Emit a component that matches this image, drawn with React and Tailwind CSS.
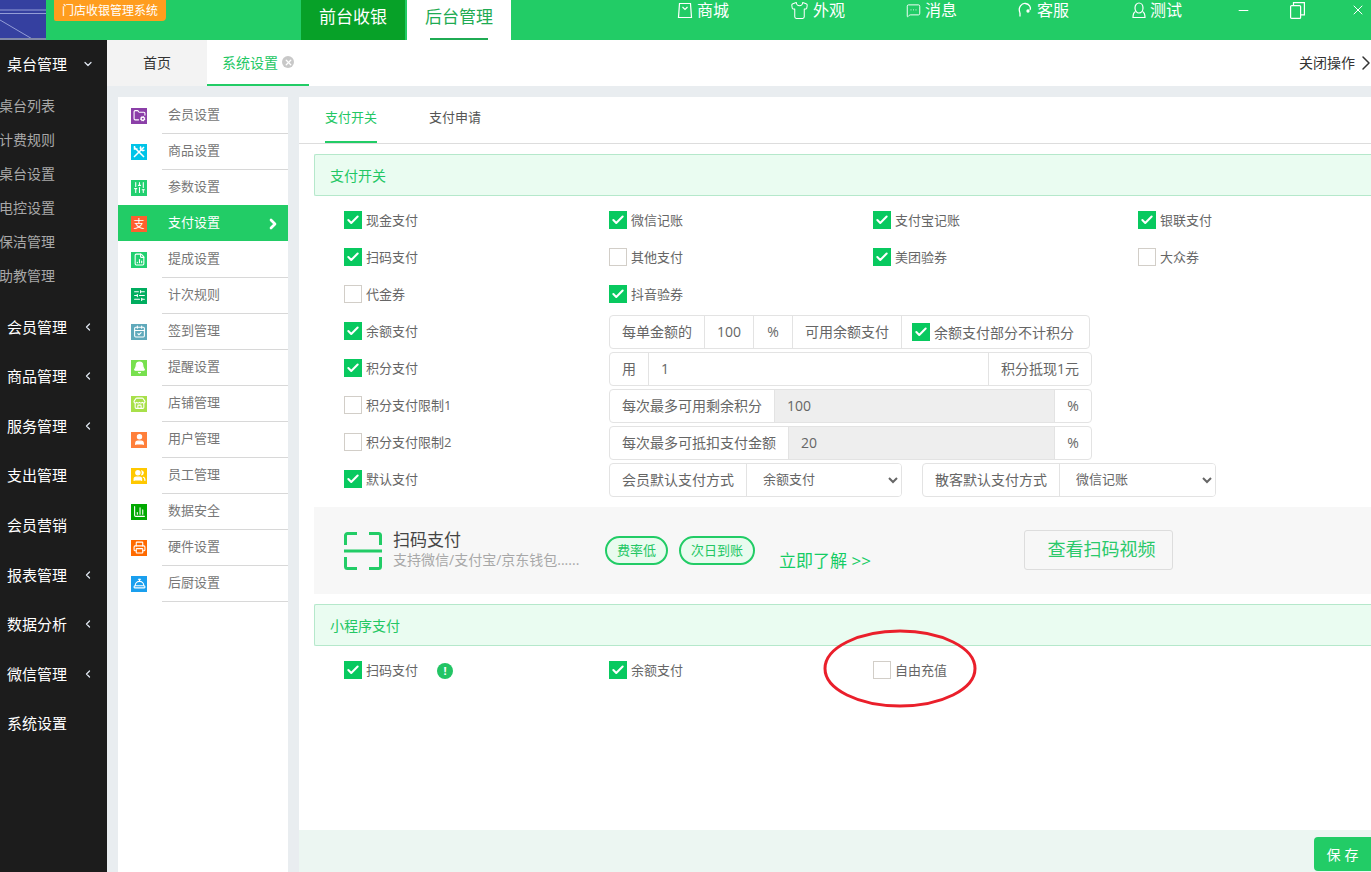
import { Check, ChevronDown, ChevronLeft, ChevronRight, Bell, CalendarCheck, ChartColumn, ConciergeBell, FileChartColumn, FolderCog, MessageSquareMore, Minus, Printer, Shirt, SlidersHorizontal, SlidersVertical, Store, User, Users, X } from 'lucide-react'

const sideGroups = [
    { label: '桌台管理', arrow: 'down', height: 'h-[48px]' },
    { label: '会员管理', arrow: 'left', height: 'h-[49.6px]' },
    { label: '商品管理', arrow: 'left', height: 'h-[49.6px]' },
    { label: '服务管理', arrow: 'left', height: 'h-[49.6px]' },
    { label: '支出管理', height: 'h-[49.6px]' },
    { label: '会员营销', height: 'h-[49.6px]' },
    { label: '报表管理', arrow: 'left', height: 'h-[49.6px]' },
    { label: '数据分析', arrow: 'left', height: 'h-[49.6px]' },
    { label: '微信管理', arrow: 'left', height: 'h-[49.6px]' },
    { label: '系统设置', height: 'h-[49.6px]' },
]

const subItems = ['桌台列表', '计费规则', '桌台设置', '电控设置', '保洁管理', '助教管理']

function ToolsIcon() {
    return (
        <svg width="14" height="14" viewBox="0 0 14 14" fill="none" stroke="white" strokeWidth="1.500">
            <path d="M2 2l10 10M2.500 1v3h3" />
            <path d="M12 2L2 12M9 1.500a2.500 2.500 0 0 0 3.500 3.500" />
        </svg>
    )
}

const menu = [
    { label: '会员设置', color: 'bg-[#8b3fa8]', Icon: FolderCog },
    { label: '商品设置', color: 'bg-[#00c4e8]', Icon: ToolsIcon },
    { label: '参数设置', color: 'bg-[#22d070]', Icon: SlidersVertical },
    { label: '支付设置', color: 'bg-[#ff5f2e]', glyph: '支', active: true },
    { label: '提成设置', color: 'bg-[#22d070]', Icon: FileChartColumn },
    { label: '计次规则', color: 'bg-[#00ad5f]', Icon: SlidersHorizontal },
    { label: '签到管理', color: 'bg-[#5fa9bb]', Icon: CalendarCheck },
    { label: '提醒设置', color: 'bg-[#77e04e]', Icon: Bell, fill: true },
    { label: '店铺管理', color: 'bg-[#a8e04a]', Icon: Store },
    { label: '用户管理', color: 'bg-[#ff7f3a]', Icon: User, fill: true },
    { label: '员工管理', color: 'bg-[#ffc800]', Icon: Users, fill: true },
    { label: '数据安全', color: 'bg-[#00a900]', Icon: ChartColumn },
    { label: '硬件设置', color: 'bg-[#ff6a00]', Icon: Printer },
    { label: '后厨设置', color: 'bg-[#1a9fee]', Icon: ConciergeBell },
]

function BagIcon() {
    return (
        <svg width="16" height="17" viewBox="0 0 16 17" fill="none" stroke="white" strokeWidth="1.2">
            <path d="M2.5 1.5h11l1 14h-13z" />
            <path d="M5.5 5l2.5 2.5L10.500 5" />
        </svg>
    )
}

function HeadsetIcon() {
    return (
        <svg width="16" height="17" viewBox="0 0 16 17" fill="none" stroke="white" strokeWidth="1.3">
            <path d="M3 11C0.500 5 5 1 8.500 1.500 12 2 14.500 5 13 8" />
            <path d="M3 11v3.500" />
            <circle cx="11" cy="9" r="1" fill="white" />
        </svg>
    )
}

function PersonIcon() {
    return (
        <svg width="14" height="17" viewBox="0 0 14 17" fill="none" stroke="white" strokeWidth="1.2">
            <ellipse cx="7" cy="6" rx="4" ry="5" />
            <path d="M3.500 9.500C1.500 10.500 1 12.500 1 15.500h12c0-3-.5-5-2.500-6" />
        </svg>
    )
}

function RestoreIcon() {
    return (
        <svg width="15" height="17" viewBox="0 0 15 17" fill="none" stroke="white" strokeWidth="1.2">
            <rect x="0.600" y="3.600" width="10" height="12.800" rx="1" />
            <path d="M3.500 3.500V0.600h10.900v12.300h-3.800" />
        </svg>
    )
}

function TopLink({ icon, label, width }) {
    return (
        <div className={`flex items-center gap-[4px] text-white text-[16px] ${width}`}>
            {icon}
            <span>{label}</span>
        </div>
    )
}

function Box({ checked }) {
    return checked ? (
        <span className="w-[18px] h-[18px] shrink-0 bg-[#08c95f] flex items-center justify-center">
            <Check size={14} color="white" strokeWidth={3.500} />
        </span>
    ) : (
        <span className="w-[18px] h-[18px] shrink-0 bg-white border border-[#d2cec8]"></span>
    )
}

function CheckItem({ checked, label, width = 'w-[265px]' }) {
    return (
        <div className={`flex items-center gap-[4px] shrink-0 text-[13px] text-[#666] ${width}`}>
            <Box checked={checked} />
            <span className="pt-[2px]">{label}</span>
        </div>
    )
}

function Seg({ children, width, gray, last }) {
    return (
        <div className={`h-full flex items-center justify-center pb-[2px] text-[14px] text-[#666] shrink-0 ${width} ${gray ? 'bg-[#eeeeee]' : ''} ${last ? '' : 'border-r border-[#e3e3e3]'}`}>
            {children}
        </div>
    )
}

function Group({ children, width }) {
    return (
        <div className={`h-[34px] mt-[3px] flex items-stretch bg-white border border-[#e3e3e3] rounded-[4px] overflow-hidden ${width}`}>
            {children}
        </div>
    )
}

function Row({ children }) {
    return <div className="h-[37px] flex items-center">{children}</div>
}

function Picker({ value, width }) {
    return (
        <select defaultValue={value} className={`h-full pl-[12px] pr-[6px] pb-[2px] text-[13px] text-[#666] bg-white outline-none ${width}`}>
            <option>{value}</option>
        </select>
    )
}

function SectionHead({ label }) {
    return (
        <div className="h-[42px] flex items-center pl-[15px] bg-[#eafcf1] border border-r-0 border-[#b5e8cb] rounded-l-[2px] text-[14px] text-[#23c764]">
            {label}
        </div>
    )
}

export default function App() {
    return (
        <div className="relative w-[1371px] h-[872px] overflow-hidden bg-[#e9edf0] font-['Open_Sans','Noto_Sans_CJK_SC',sans-serif]">
            {/* top bar */}
            <div className="h-[40px] bg-[#22cc66] flex">
                <div className="w-[46px] h-full shrink-0 bg-[#3540a0]">
                    <svg width="46" height="40" viewBox="0 0 46 40">
                        <path d="M0 10h46M0 13.500h46M0 20l34 20" stroke="#b4bce8" strokeWidth="1" opacity="0.750" fill="none" />
                        <rect x="0" y="38" width="46" height="2" fill="#8088a8" />
                    </svg>
                </div>
                <div className="ml-[8px] w-[112px] h-[21px] shrink-0 bg-[#ff9d1e] rounded-br-[4px] rounded-bl-[2px] text-white text-[12px] leading-[21px] text-center">门店收银管理系统</div>
                <div className="ml-[135px] w-[104px] shrink-0 bg-[#07a128] text-white text-[17px] leading-[34px] text-center">前台收银</div>
                <div className="ml-[2px] w-[104px] shrink-0 bg-white text-[#1fab53] text-[17px] leading-[34px] text-center flex flex-col items-center justify-between">
                    <span>后台管理</span>
                    <span className="w-[58px] h-[2px] bg-[#1fab53]"></span>
                </div>
                <div className="ml-[166px] flex items-center h-[20px]">
                    <TopLink width="w-[113px]" label="商城" icon={<BagIcon />} />
                    <TopLink width="w-[116px]" label="外观" icon={<Shirt size={19} color="white" strokeWidth={1.300} />} />
                    <TopLink width="w-[111px]" label="消息" icon={<MessageSquareMore size={15} color="white" strokeWidth={1.500} />} />
                    <TopLink width="w-[115px]" label="客服" icon={<HeadsetIcon />} />
                    <TopLink width="w-[104px]" label="测试" icon={<PersonIcon />} />
                    <div className="w-[54px]"><Minus size={15} color="white" strokeWidth={1.800} /></div>
                    <div className="w-[60px]"><RestoreIcon /></div>
                    <X size={16} color="white" strokeWidth={1.500} />
                </div>
            </div>

            <div className="flex h-[832px]">
                {/* left nav */}
                <div className="w-[107px] shrink-0 bg-[#1c1c1c] overflow-hidden">
                    {sideGroups.map((group, i) => (
                        <div key={group.label}>
                            <div className={`flex items-center pl-[7px] text-[15px] text-white ${group.height}`}>
                                <span className="w-[75px]">{group.label}</span>
                                {group.arrow === 'down' && <ChevronDown size={12} color="#dfe6f0" strokeWidth={2.500} />}
                                {group.arrow === 'left' && <ChevronLeft size={12} color="#dfe6f0" strokeWidth={2.500} />}
                            </div>
                            {i === 0 && (
                                <div className="pb-[10px]">
                                    {subItems.map(item => (
                                        <div key={item} className="h-[34px] -ml-px flex items-center text-[14px] text-[#a8a8a8]">{item}</div>
                                    ))}
                                </div>
                            )}
                        </div>
                    ))}
                </div>

                <div className="flex-1 min-w-0 flex flex-col">
                    {/* tab strip */}
                    <div className="h-[46px] shrink-0 bg-white flex">
                        <div className="w-[100px] bg-[#f3f3f3] flex items-center justify-center text-[14px] text-[#333] pb-[1px]">首页</div>
                        <div className="w-[102px] border-b-[2px] border-[#22cc66] flex items-center pl-[15px] gap-[4px] text-[14px] text-[#23c764]">
                            <span>系统设置</span>
                            <span className="w-[12px] h-[12px] rounded-full bg-[#c8c8c8] flex items-center justify-center">
                                <X size={9} color="white" strokeWidth={3.500} />
                            </span>
                        </div>
                        <div className="flex-1 flex items-center justify-end overflow-hidden text-[14px] text-[#333] pb-[1px]">
                            <span>关闭操作</span>
                            <ChevronRight size={24} color="#333" strokeWidth={1.500} className="shrink-0 -mr-[7px] -ml-[1px]" />
                        </div>
                    </div>

                    <div className="flex-1 min-h-0 flex pt-[11px] pl-[11px] gap-[11px]">
                        {/* settings menu */}
                        <div className="w-[170px] shrink-0 bg-white">
                            {menu.map(item => {
                                const Icon = item.Icon
                                return (
                                    <div key={item.label} className={`relative h-[36px] flex items-center pl-[13px] pt-[1px] text-[13px] ${item.active ? 'bg-[#22cc66] text-white' : 'text-[#777]'}`}>
                                        <span className={`w-[16px] h-[16px] shrink-0 flex items-center justify-center text-white text-[11px] leading-none ${item.color}`}>
                                            {Icon ? <Icon size={13} color="white" strokeWidth={2} fill={item.fill ? 'white' : 'none'} /> : item.glyph}
                                        </span>
                                        <span className="ml-[21px] mb-[2px]">{item.label}</span>
                                        {item.active && <ChevronRight size={16} color="white" strokeWidth={4} className="absolute right-[7px]" />}
                                        {!item.active && <span className="absolute left-[44px] right-0 -bottom-px h-px bg-[#d8d8d8]"></span>}
                                    </div>
                                )
                            })}
                        </div>

                        {/* main panel */}
                        <div className="flex-1 min-w-0 flex flex-col">
                            <div className="flex-1 min-h-0 bg-white">
                                <div className="h-[47px] flex pl-[26px] gap-[52px] border-b border-[#dddddd] text-[13px]">
                                    <div className="h-[46px] flex items-center text-[#23c764] border-b-[2px] border-[#22cc66] pb-[3px]">支付开关</div>
                                    <div className="h-[46px] flex items-center text-[#555] pb-[5px]">支付申请</div>
                                </div>

                                <div className="pl-[15px] pt-[10px]">
                                    <SectionHead label="支付开关" />
                                    <div className="pl-[30px] pt-[5px]">
                                        <Row>
                                            <CheckItem checked label="现金支付" />
                                            <CheckItem checked label="微信记账" width="w-[264px]" />
                                            <CheckItem checked label="支付宝记账" />
                                            <CheckItem checked label="银联支付" />
                                        </Row>
                                        <Row>
                                            <CheckItem checked label="扫码支付" />
                                            <CheckItem label="其他支付" width="w-[264px]" />
                                            <CheckItem checked label="美团验券" />
                                            <CheckItem label="大众券" />
                                        </Row>
                                        <Row>
                                            <CheckItem label="代金券" />
                                            <CheckItem checked label="抖音验券" />
                                        </Row>
                                        <Row>
                                            <CheckItem checked label="余额支付" />
                                            <Group width="w-[481px]">
                                                <Seg width="w-[95px]">每单金额的</Seg>
                                                <Seg width="w-[49px]">100</Seg>
                                                <Seg width="w-[39px]">%</Seg>
                                                <Seg width="w-[109px]">可用余额支付</Seg>
                                                <div className="flex-1 flex items-center gap-[4px] pl-[10px] text-[14px] text-[#666] whitespace-nowrap">
                                                    <Box checked />
                                                    <span>余额支付部分不计积分</span>
                                                </div>
                                            </Group>
                                        </Row>
                                        <Row>
                                            <CheckItem checked label="积分支付" />
                                            <Group width="w-[483px]">
                                                <Seg width="w-[39px]">用</Seg>
                                                <div className="w-[340px] border-r border-[#e3e3e3] flex items-center pl-[12px] pb-[2px] text-[14px] text-[#666]">1</div>
                                                <Seg width="flex-1" last>积分抵现1元</Seg>
                                            </Group>
                                        </Row>
                                        <Row>
                                            <CheckItem label="积分支付限制1" />
                                            <Group width="w-[483px]">
                                                <Seg width="w-[165px]">每次最多可用剩余积分</Seg>
                                                <div className="w-[280px] bg-[#eeeeee] border-r border-[#e3e3e3] flex items-center pl-[12px] pb-[2px] text-[14px] text-[#666]">100</div>
                                                <Seg width="flex-1" last>%</Seg>
                                            </Group>
                                        </Row>
                                        <Row>
                                            <CheckItem label="积分支付限制2" />
                                            <Group width="w-[483px]">
                                                <Seg width="w-[179px]">每次最多可抵扣支付金额</Seg>
                                                <div className="w-[266px] bg-[#eeeeee] border-r border-[#e3e3e3] flex items-center pl-[12px] pb-[2px] text-[14px] text-[#666]">20</div>
                                                <Seg width="flex-1" last>%</Seg>
                                            </Group>
                                        </Row>
                                        <Row>
                                            <CheckItem checked label="默认支付" />
                                            <Group width="w-[293px]">
                                                <Seg width="w-[137px]">会员默认支付方式</Seg>
                                                <Picker value="余额支付" width="flex-1 min-w-0" />
                                            </Group>
                                            <div className="ml-[20px]">
                                                <Group width="w-[294px]">
                                                    <Seg width="w-[137px]">散客默认支付方式</Seg>
                                                    <Picker value="微信记账" width="flex-1 min-w-0" />
                                                </Group>
                                            </div>
                                        </Row>
                                    </div>

                                    {/* promo */}
                                    <div className="mt-[10px] h-[87px] bg-[#f7f7f7] flex items-center pl-[30px]">
                                        <svg width="38" height="38" viewBox="0 0 38 38" fill="none" stroke="#22cc66" strokeWidth="3" className="shrink-0">
                                            <path d="M1.500 13V3.500a2 2 0 0 1 2-2H13M25 1.500h9.500a2 2 0 0 1 2 2V13M1.500 25v9.500a2 2 0 0 0 2 2H13M25 36.500h9.500a2 2 0 0 0 2-2V25" />
                                            <path d="M0 19h38" />
                                        </svg>
                                        <div className="ml-[11px] w-[212px] shrink-0 -mt-[3px]">
                                            <div className="text-[17px] leading-[22px] text-[#444]">扫码支付</div>
                                            <div className="text-[14px] leading-[18px] text-[#a8a8a8] whitespace-nowrap">支持微信/支付宝/京东钱包......</div>
                                        </div>
                                        <span className="w-[63px] h-[29px] shrink-0 bg-[#e9fbef] border-[2px] border-[#22cc66] rounded-full flex items-center justify-center text-[13px] text-[#23c764]">费率低</span>
                                        <span className="ml-[11px] w-[76px] h-[29px] shrink-0 bg-[#e9fbef] border-[2px] border-[#22cc66] rounded-full flex items-center justify-center text-[13px] text-[#23c764]">次日到账</span>
                                        <span className="ml-[24px] w-[245px] shrink-0 pt-[20px] text-[17px] text-[#14cc64] whitespace-nowrap">立即了解 &gt;&gt;</span>
                                        <div className="w-[149px] h-[40px] shrink-0 -mt-[2px] pl-[6px] border border-[#dddddd] rounded-[3px] flex items-center justify-center text-[18px] text-[#2bc96b]">查看扫码视频</div>
                                    </div>

                                    <div className="mt-[10px]">
                                        <SectionHead label="小程序支付" />
                                    </div>
                                    <div className="pl-[30px] h-[48px] flex items-center">
                                        <div className="w-[265px] flex items-center">
                                            <CheckItem checked label="扫码支付" width="w-[93px]" />
                                            <span className="w-[16px] h-[16px] mt-[2px] rounded-full bg-[#22c464] text-white text-[11px] font-bold flex items-center justify-center">!</span>
                                        </div>
                                        <CheckItem checked label="余额支付" width="w-[264px]" />
                                        <CheckItem label="自由充值" />
                                    </div>
                                </div>
                            </div>
                            <div className="h-[42px] shrink-0 bg-[#ecf6f2] flex justify-end pt-[7px]">
                                <div className="w-[57px] h-[34px] pl-[4px] bg-[#22cc66] rounded-l-[4px] flex items-center justify-center text-[14px] tracking-[4px] text-white">保存</div>
                            </div>
                        </div>
                    </div>
                </div>
            </div>

            {/* hand-drawn annotation over the screenshot */}
            <svg width="154" height="80" viewBox="0 0 154 80" fill="none" className="absolute left-[823px] top-[629px]">
                <ellipse cx="77" cy="39.500" rx="75" ry="37.500" stroke="#ea1f2b" strokeWidth="3" />
            </svg>
        </div>
    )
}
